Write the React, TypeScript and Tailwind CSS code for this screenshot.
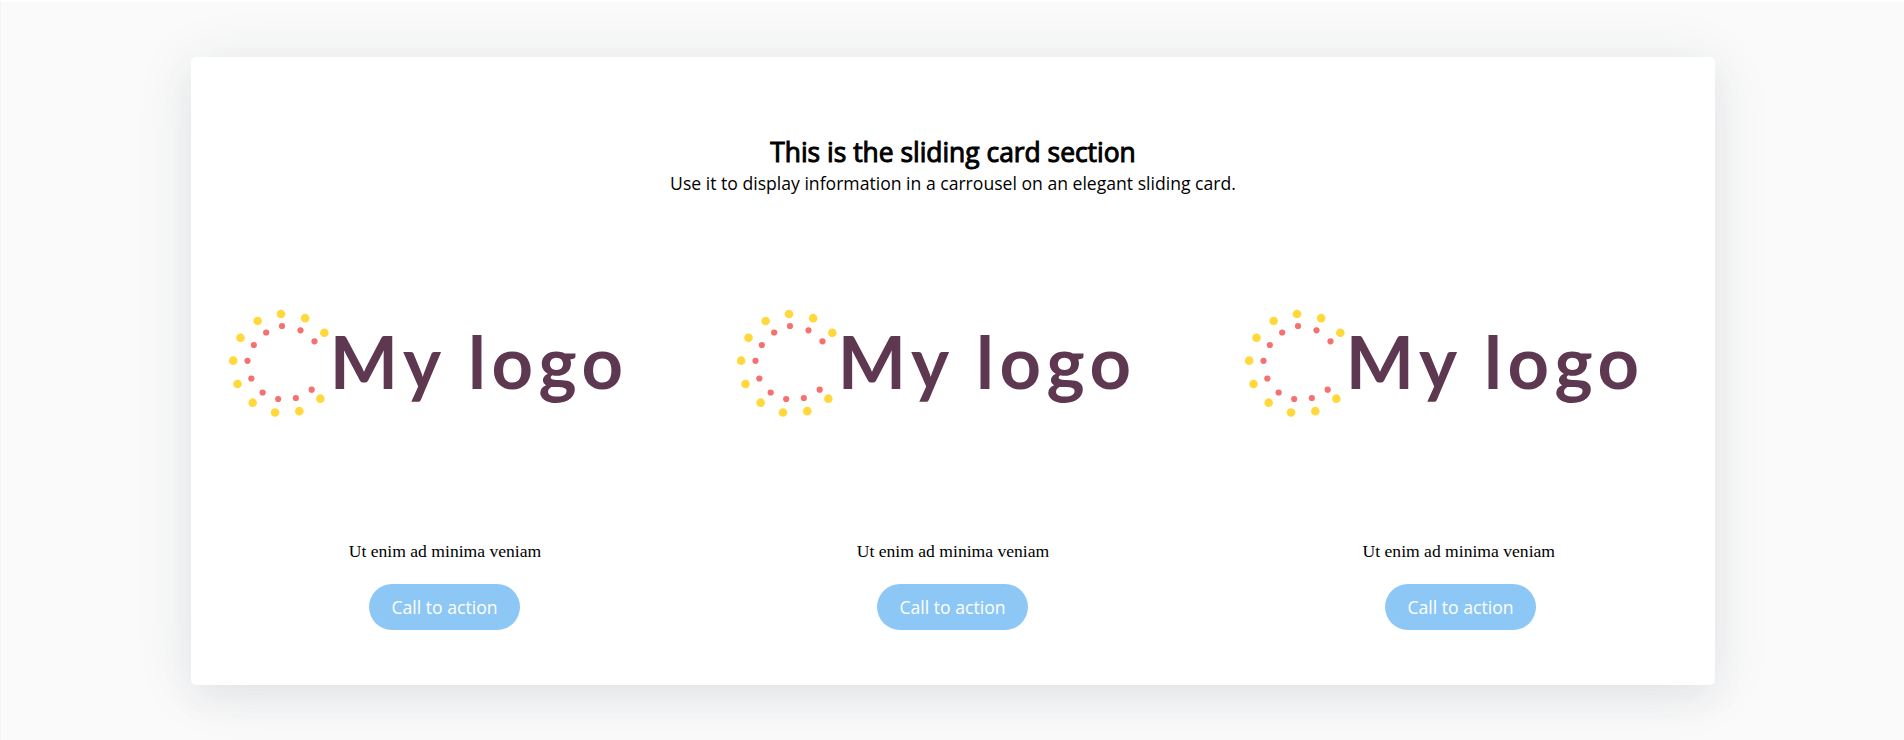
const outerDots = [
  [198, 57], [270.5, 69.5], [328, 113.5], [128, 78], [76.5, 128.5], [54.5, 197],
  [67.5, 267], [113, 323], [180, 352.5], [253, 348.5], [316, 311],
];
const innerDots = [
  [201, 93], [256.5, 106], [298.5, 139], [153.5, 112.5], [116.5, 150], [97.5, 197.5],
  [109, 250.5], [143, 292.5], [189.5, 312], [242.5, 309], [290, 284],
];

function Logo() {
  return (
    <svg width="428" height="130" viewBox="0 0 428 130" className="ml-6 block self-start" role="img">
      {outerDots.map(([x, y]) => (
        <circle key={`${x}-${y}`} cx={x / 3} cy={y / 3} r="4.3" fill="#ffd93b" />
      ))}
      {innerDots.map(([x, y]) => (
        <circle key={`${x}-${y}`} cx={x / 3} cy={y / 3} r="3.1" fill="#f77070" />
      ))}
      <text x="114.8" y="94.3" fontFamily="Lato, sans-serif" fontWeight="700" fontSize="72.3" letterSpacing="5.6" fill="#5e3750">
        My logo
      </text>
    </svg>
  );
}

function Slide({ text }: { text: string }) {
  return (
    <article className="flex w-[508px] flex-col items-center">
      <Logo />
      <p className="mt-[112px] h-7 whitespace-pre font-['Liberation_Serif',serif] text-[17.6px] leading-7 text-black">{text}</p>
      <button className="mt-[19px] mr-px h-[46px] w-[151px] rounded-full bg-[#8dc7f6] text-[17.6px] text-white">
        Call to action
      </button>
    </article>
  );
}

export default function App() {
  return (
    <main className="h-[740px] overflow-hidden border-l border-t-2 border-l-[#f5f5f5] border-t-white bg-[#fafafa] pl-[190px] pt-[55px] font-['Open_Sans',sans-serif]">
      <section className="h-[628px] w-[1524px] rounded-[5px] bg-white pt-[78px] shadow-[0_15px_35px_rgba(50,50,93,0.05),0_5px_60px_rgba(30,60,60,0.09)]">
        <header className="text-center text-black">
          <h2 className="text-[26.4px] leading-[34px] font-normal [-webkit-text-stroke:1px_black]">This is the sliding card section</h2>
          <p className="text-[17.6px] leading-7">Use it to display information in a carrousel on an elegant sliding card.</p>
        </header>
        <div className="mt-[98px] flex">
          <Slide text="Ut enim ad minima veniam" />
          <Slide text="Ut enim ad minima veniam" />
          <Slide text={"Ut enim ad minima veniam\u00a0"} />
        </div>
      </section>
    </main>
  );
}
